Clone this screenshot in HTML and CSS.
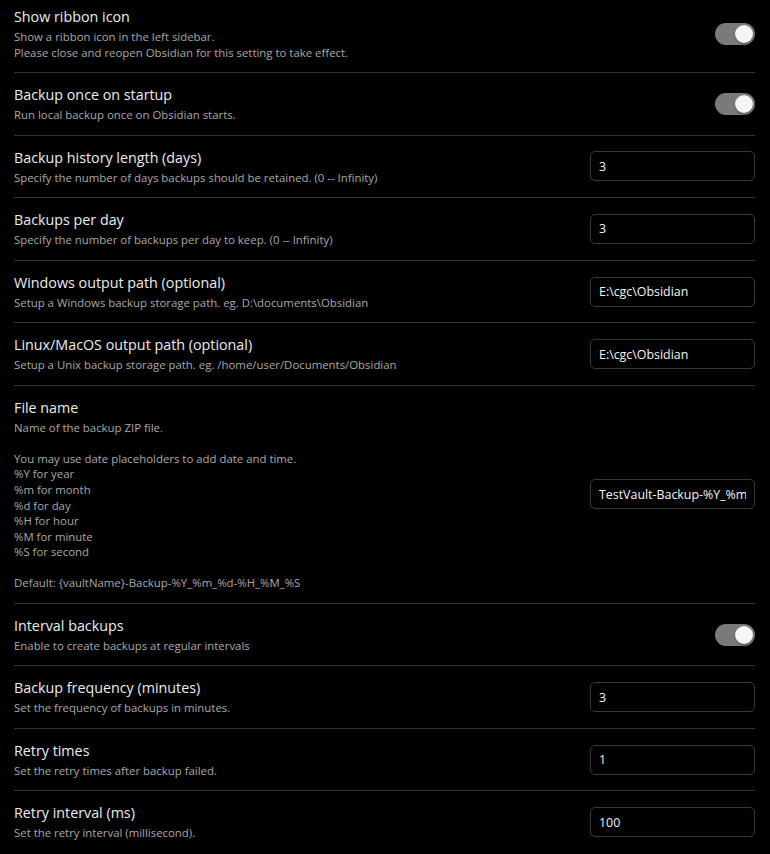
FILE: index.html
```html
<!DOCTYPE html>
<html lang="en">
<head>
<meta charset="utf-8">
<title>Local Backup Settings</title>
<link rel="stylesheet" href="styles.css">
</head>
<body>
<div class="settings">
  <div class="setting-item">
    <div class="setting-info">
      <div class="setting-name">Show ribbon icon</div>
      <div class="setting-desc">Show a ribbon icon in the left sidebar.<br>Please close and reopen Obsidian for this setting to take effect.</div>
    </div>
    <div class="setting-control"><div class="toggle is-on"><div class="thumb"></div></div></div>
  </div>
  <div class="setting-item">
    <div class="setting-info">
      <div class="setting-name">Backup once on startup</div>
      <div class="setting-desc">Run local backup once on Obsidian starts.</div>
    </div>
    <div class="setting-control"><div class="toggle is-on"><div class="thumb"></div></div></div>
  </div>
  <div class="setting-item">
    <div class="setting-info">
      <div class="setting-name">Backup history length (days)</div>
      <div class="setting-desc">Specify the number of days backups should be retained. (0 -- Infinity)</div>
    </div>
    <div class="setting-control"><input class="text-input" type="text" value="3"></div>
  </div>
  <div class="setting-item">
    <div class="setting-info">
      <div class="setting-name">Backups per day</div>
      <div class="setting-desc">Specify the number of backups per day to keep. (0 -- Infinity)</div>
    </div>
    <div class="setting-control"><input class="text-input" type="text" value="3"></div>
  </div>
  <div class="setting-item">
    <div class="setting-info">
      <div class="setting-name">Windows output path (optional)</div>
      <div class="setting-desc">Setup a Windows backup storage path. eg. D:\documents\Obsidian</div>
    </div>
    <div class="setting-control"><input class="text-input" type="text" value="E:\cgc\Obsidian"></div>
  </div>
  <div class="setting-item">
    <div class="setting-info">
      <div class="setting-name">Linux/MacOS output path (optional)</div>
      <div class="setting-desc">Setup a Unix backup storage path. eg. /home/user/Documents/Obsidian</div>
    </div>
    <div class="setting-control"><input class="text-input" type="text" value="E:\cgc\Obsidian"></div>
  </div>
  <div class="setting-item">
    <div class="setting-info">
      <div class="setting-name">File name</div>
      <div class="setting-desc">Name of the backup ZIP file.<br><br>You may use date placeholders to add date and time.<br>%Y for year<br>%m for month<br>%d for day<br>%H for hour<br>%M for minute<br>%S for second<br><br>Default: {vaultName}-Backup-%Y_%m_%d-%H_%M_%S</div>
    </div>
    <div class="setting-control"><input class="text-input" type="text" value="TestVault-Backup-%Y_%m_%d-%H_%M_%S"></div>
  </div>
  <div class="setting-item">
    <div class="setting-info">
      <div class="setting-name">Interval backups</div>
      <div class="setting-desc">Enable to create backups at regular intervals</div>
    </div>
    <div class="setting-control"><div class="toggle is-on"><div class="thumb"></div></div></div>
  </div>
  <div class="setting-item">
    <div class="setting-info">
      <div class="setting-name">Backup frequency (minutes)</div>
      <div class="setting-desc">Set the frequency of backups in minutes.</div>
    </div>
    <div class="setting-control"><input class="text-input" type="text" value="3"></div>
  </div>
  <div class="setting-item">
    <div class="setting-info">
      <div class="setting-name">Retry times</div>
      <div class="setting-desc">Set the retry times after backup failed.</div>
    </div>
    <div class="setting-control"><input class="text-input" type="text" value="1"></div>
  </div>
  <div class="setting-item">
    <div class="setting-info">
      <div class="setting-name">Retry interval (ms)</div>
      <div class="setting-desc">Set the retry interval (millisecond).</div>
    </div>
    <div class="setting-control"><input class="text-input" type="text" value="100"></div>
  </div>
</div>
</body>
</html>
```

FILE: styles.css
```css
html, body {
  margin: 0;
  padding: 0;
  background: #000;
  overflow: hidden;
}

body {
  font-family: "Open Sans", "Noto Sans", sans-serif;
  color: #dadada;
}

.settings {
  margin: -5px 15px 0 14px;
}

.setting-item {
  display: flex;
  align-items: center;
  padding: 12px 0;
  border-top: 1px solid #333;
}

.setting-item:first-child {
  border-top: none;
}

.setting-info {
  flex: 1 1 auto;
  margin-right: 16px;
}

.setting-name {
  font-size: 14.3px;
  line-height: 19.5px;
  color: #ececec;
}

.setting-desc {
  font-size: 11.4px;
  line-height: 15.55px;
  padding-top: 2.5px;
  color: #a8a8a8;
}

.setting-control {
  flex: 0 0 auto;
  display: flex;
  align-items: center;
  justify-content: flex-end;
}

.toggle {
  width: 40px;
  height: 22px;
  border-radius: 11px;
  background: #7a7a7a;
  display: flex;
  align-items: center;
  padding: 0 2px;
  box-sizing: border-box;
}

.toggle.is-on {
  justify-content: flex-end;
}

.thumb {
  width: 18px;
  height: 18px;
  border-radius: 50%;
  background: #f5f5f5;
  box-shadow: 0 1px 2px rgba(0, 0, 0, 0.35);
}

.text-input {
  width: 165px;
  height: 30px;
  box-sizing: border-box;
  background: #000;
  border: 1px solid #383838;
  border-radius: 5px;
  padding: 0 8px;
  color: #f4f4f4;
  font-family: "Open Sans", "Noto Sans", sans-serif;
  font-size: 12.4px;
  outline: none;
}
```
